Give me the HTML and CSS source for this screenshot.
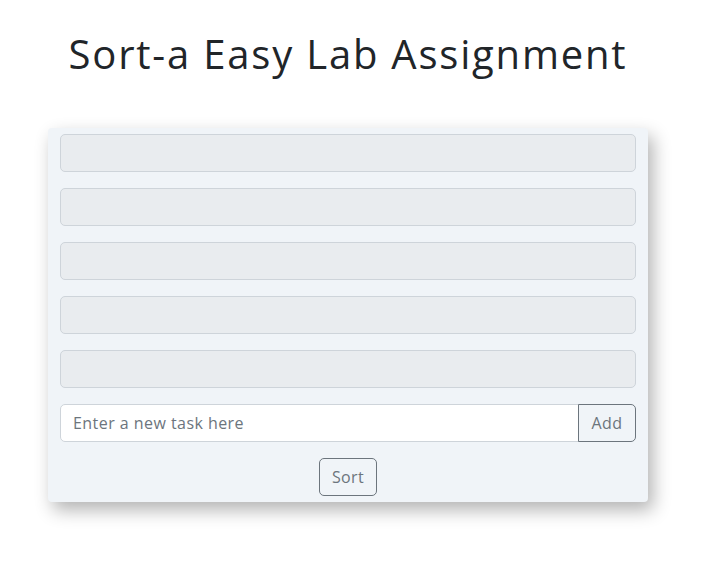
FILE: index.html
```html
<!DOCTYPE html>
<html>
<head>
<meta charset="utf-8">
<link rel="stylesheet" href="styles.css">
</head>
<body>
<main class="page">
  <h1 class="title">Sort-a Easy Lab Assignment</h1>
  <section class="card">
    <input class="task" type="text" disabled>
    <input class="task" type="text" disabled>
    <input class="task" type="text" disabled>
    <input class="task" type="text" disabled>
    <input class="task" type="text" disabled>
    <div class="input-group">
      <input class="new-task" type="text" placeholder="Enter a new task here">
      <button class="btn btn-add" type="button">Add</button>
    </div>
    <div class="sort-row">
      <button class="btn btn-sort" type="button">Sort</button>
    </div>
  </section>
</main>
</body>
</html>
```
FILE: styles.css
```css
* { box-sizing: border-box; }
html, body { margin: 0; padding: 0; background: #fff; }
body {
  font-family: "Open Sans", "Noto Sans", sans-serif;
  color: #212529;
}
.page {
  width: 696px;
  padding-bottom: 48px;
  display: flex;
  flex-direction: column;
  align-items: center;
}
.title {
  margin: 30px 0 50px;
  font-family: "Open Sans", sans-serif;
  font-weight: 400;
  font-size: 40px;
  line-height: 48px;
  letter-spacing: 1.8px;
  color: #212529;
}
.card {
  width: 600px;
  background: #f0f4f8;
  border-radius: 4px;
  padding: 6px 12px;
  display: flex;
  flex-direction: column;
  gap: 16px;
  box-shadow: 5px 8px 18px rgba(0,0,0,0.3);
}
.task, .new-task {
  height: 38px;
  border: 1px solid #ced4da;
  border-radius: 5px;
  font: inherit;
  font-size: 16px;
  padding: 6px 12px;
}
.task { background: #e9ecef; }
.input-group { display: flex; }
.new-task {
  flex: 1;
  background: #fff;
  border-radius: 5px 0 0 5px;
  color: #212529;
  letter-spacing: 0.45px;
}
.new-task::placeholder { color: #6c757d; }
.btn {
  height: 38px;
  background: transparent;
  border: 1px solid #6c757d;
  color: #6c757d;
  font: inherit;
  font-size: 16px;
  letter-spacing: 0.4px;
  padding: 6px 8px;
  border-radius: 5px;
}
.btn-add {
  width: 58px;
  border-radius: 0 5px 5px 0;
  margin-left: -1px;
}
.sort-row { display: flex; justify-content: center; }
.btn-sort { width: 58px; }
```
